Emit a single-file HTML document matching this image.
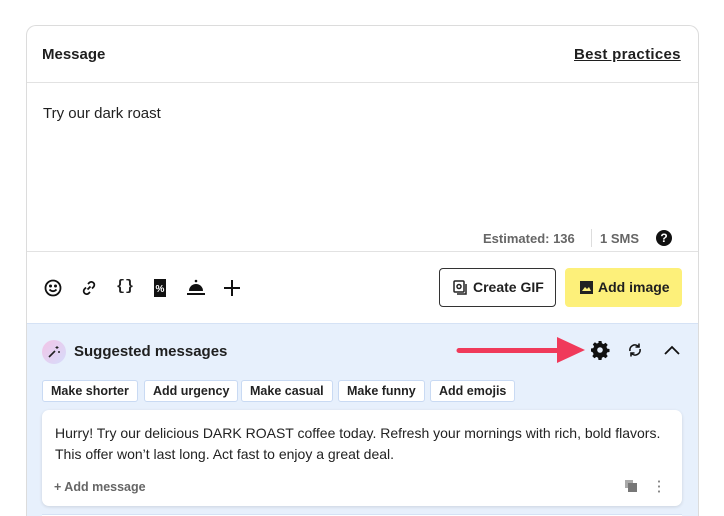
<!DOCTYPE html>
<html><head><meta charset="utf-8"><style>
*{margin:0;padding:0;box-sizing:border-box}
html,body{width:724px;height:516px;overflow:hidden}
body{background:#fff;font-family:"Liberation Sans",sans-serif;color:#1f1f1f;position:relative}
.a{position:absolute}
.card{left:26px;top:25px;width:673px;height:491px;border:1px solid #dcdcdc;border-bottom:none;border-radius:10px 10px 0 0;overflow:hidden}
.chip{position:absolute;top:380px;height:22px;border:1px solid #c9daf3;background:#fff;border-radius:3px;font-size:12.5px;font-weight:bold;line-height:20px;padding:0 8px;color:#222}
</style></head><body>
<div class="a card"></div>
<div class="a" style="left:42px;top:46px;font-size:15px;font-weight:bold">Message</div>
<div class="a" style="left:574px;top:46px;font-size:15px;font-weight:bold;text-decoration:underline;letter-spacing:.3px">Best practices</div>
<div class="a" style="left:27px;top:82px;width:671px;height:1px;background:#e2e2e2"></div>
<div class="a" style="left:43px;top:105px;font-size:15px">Try our dark roast</div>
<div class="a" style="left:483px;top:231px;font-size:13px;font-weight:bold;color:#666">Estimated: 136</div>
<div class="a" style="left:591px;top:229px;width:1px;height:18px;background:#ddd"></div>
<div class="a" style="left:600px;top:231px;font-size:13px;font-weight:bold;color:#666">1 SMS</div>
<div class="a" style="left:656px;top:230px;width:16px;height:16px;border-radius:50%;background:#111;color:#fff;font-size:12px;font-weight:bold;text-align:center;line-height:16px">?</div>
<div class="a" style="left:27px;top:251px;width:671px;height:1px;background:#e2e2e2"></div>
<svg class="a" style="left:43px;top:278px" width="20" height="20" viewBox="0 0 20 20" fill="none" stroke="#111" stroke-width="1.8"><circle cx="10" cy="10" r="7.5"/><circle cx="7.5" cy="8" r=".6" fill="#111"/><circle cx="12.5" cy="8" r=".6" fill="#111"/><path d="M6.5 11.5q3.5 3.5 7 0"/></svg>
<svg class="a" style="left:79px;top:278px" width="20" height="20" viewBox="0 0 20 20" fill="none" stroke="#111" stroke-width="1.8"><path d="M8.5 11.5l3-3M9 6l1.5-1.5a3 3 0 014.2 4.2L13 10.5M11 14l-1.5 1.5a3 3 0 01-4.2-4.2L7 9.5"/></svg>
<div class="a" style="left:116px;top:278px;font-size:15px;font-weight:bold;font-family:'Liberation Mono',monospace">{}</div>
<svg class="a" style="left:152px;top:278px" width="16" height="20" viewBox="0 0 16 20"><path d="M2 1h12v18H2z" fill="#111"/><text x="8" y="14" font-size="10" fill="#fff" text-anchor="middle" font-weight="bold" font-family="Liberation Sans">%</text></svg>
<svg class="a" style="left:186px;top:279px" width="20" height="18" viewBox="0 0 20 18"><circle cx="10" cy="2" r="1.3" fill="#111"/><path d="M3 12a7 7 0 0114 0z" fill="#111"/><rect x="1" y="14" width="18" height="2" fill="#111"/></svg>
<svg class="a" style="left:223px;top:279px" width="18" height="18" viewBox="0 0 18 18" stroke="#111" stroke-width="2"><path d="M9 1v16M1 9h16"/></svg>
<div class="a" style="left:439px;top:268px;width:117px;height:39px;border:1px solid #333;border-radius:4px;font-size:14px;font-weight:bold;line-height:37px;padding-left:33px">Create GIF</div>
<svg class="a" style="left:453px;top:280px" width="14" height="15" viewBox="0 0 14 15" fill="none" stroke="#222" stroke-width="1.5"><rect x="1" y="1" width="10" height="11" rx="1"/><path d="M4 14h9V4"/><circle cx="6" cy="6.5" r="2"/></svg>
<div class="a" style="left:565px;top:268px;width:117px;height:39px;background:#fdf07a;border-radius:4px;font-size:14px;font-weight:bold;line-height:39px;padding-left:33px">Add image</div>
<svg class="a" style="left:580px;top:281px" width="13" height="13" viewBox="0 0 13 13"><rect width="13" height="13" fill="#222"/><path d="M2 10l3-4 2 2 2-2 2 4z" fill="#fdf07a"/></svg>
<div class="a" style="left:27px;top:323px;width:671px;height:193px;background:#e7f0fc;border-top:1px solid #d5e2f5"></div>
<div class="a" style="left:42px;top:340px;width:24px;height:24px;border-radius:50%;background:linear-gradient(135deg,#f2c4e6,#d6dcfb)"></div>
<svg class="a" style="left:47px;top:345px" width="14" height="14" viewBox="0 0 14 14" stroke="#222" stroke-width="1.6"><path d="M2 12l6-6"/><path d="M10 1v3M8.5 2.5h3M12 6v2M11 7h2" stroke-width="1"/></svg>
<div class="a" style="left:74px;top:343px;font-size:15px;font-weight:bold">Suggested messages</div>
<svg class="a" style="left:454px;top:334px" width="134" height="32" viewBox="0 0 134 32"><path d="M5 14h98V3l28 13-28 13V19H5a2.5 2.5 0 010-5z" fill="#f03a5a"/></svg>
<svg class="a" style="left:590px;top:340px" width="20" height="20" viewBox="0 0 20 20"><path fill="#111" d="M8.5 1h3l.4 2.3 1.7.8 2-1.3 2.1 2.1-1.3 2 .8 1.7 2.3.4v3l-2.3.4-.8 1.7 1.3 2-2.1 2.1-2-1.3-1.7.8-.4 2.3h-3l-.4-2.3-1.7-.8-2 1.3-2.1-2.1 1.3-2-.8-1.7L1 11.5v-3l2.3-.4.8-1.7-1.3-2 2.1-2.1 2 1.3 1.7-.8z"/><circle cx="10" cy="10" r="2.8" fill="#e7f0fc"/></svg>
<svg class="a" style="left:627px;top:342px" width="16" height="16" viewBox="0 0 16 16" fill="none" stroke="#111" stroke-width="1.6"><path d="M3 9a5 5 0 018.5-4.5M13 7a5 5 0 01-8.5 4.5"/><path d="M12 1.5v3.5H8.5M4 14.5V11h3.5"/></svg>
<svg class="a" style="left:663px;top:344px" width="18" height="12" viewBox="0 0 18 12" fill="none" stroke="#111" stroke-width="1.8"><path d="M2 10l7-7 7 7"/></svg>
<div class="chip" style="left:42px">Make shorter</div>
<div class="chip" style="left:144px">Add urgency</div>
<div class="chip" style="left:241px">Make casual</div>
<div class="chip" style="left:338px">Make funny</div>
<div class="chip" style="left:430px">Add emojis</div>
<div class="a" style="left:42px;top:410px;width:640px;height:96px;background:#fff;border-radius:7px;box-shadow:0 1px 3px rgba(0,0,0,.12)"></div>
<div class="a" style="left:42px;top:514px;width:640px;height:2px;background:#fff;border-top:1px solid #d5e2f5"></div>
<div class="a" style="left:55px;top:423px;font-size:14px;line-height:21px;width:625px;color:#222">Hurry! Try our delicious DARK ROAST coffee today. Refresh your mornings with rich, bold flavors. This offer won’t last long. Act fast to enjoy a great deal.</div>
<div class="a" style="left:54px;top:480px;font-size:12.5px;font-weight:bold;color:#666">+ Add message</div>
<svg class="a" style="left:625px;top:480px" width="12" height="12" viewBox="0 0 12 12"><rect x="0" y="0" width="8" height="8" fill="#aaa"/><rect x="3" y="3" width="9" height="9" fill="#777"/></svg>
<div class="a" style="left:658px;top:479px;width:2px;height:14px;background:radial-gradient(circle,#888 1px,transparent 1.2px) 0 0/2px 5px"></div>
</body></html>
